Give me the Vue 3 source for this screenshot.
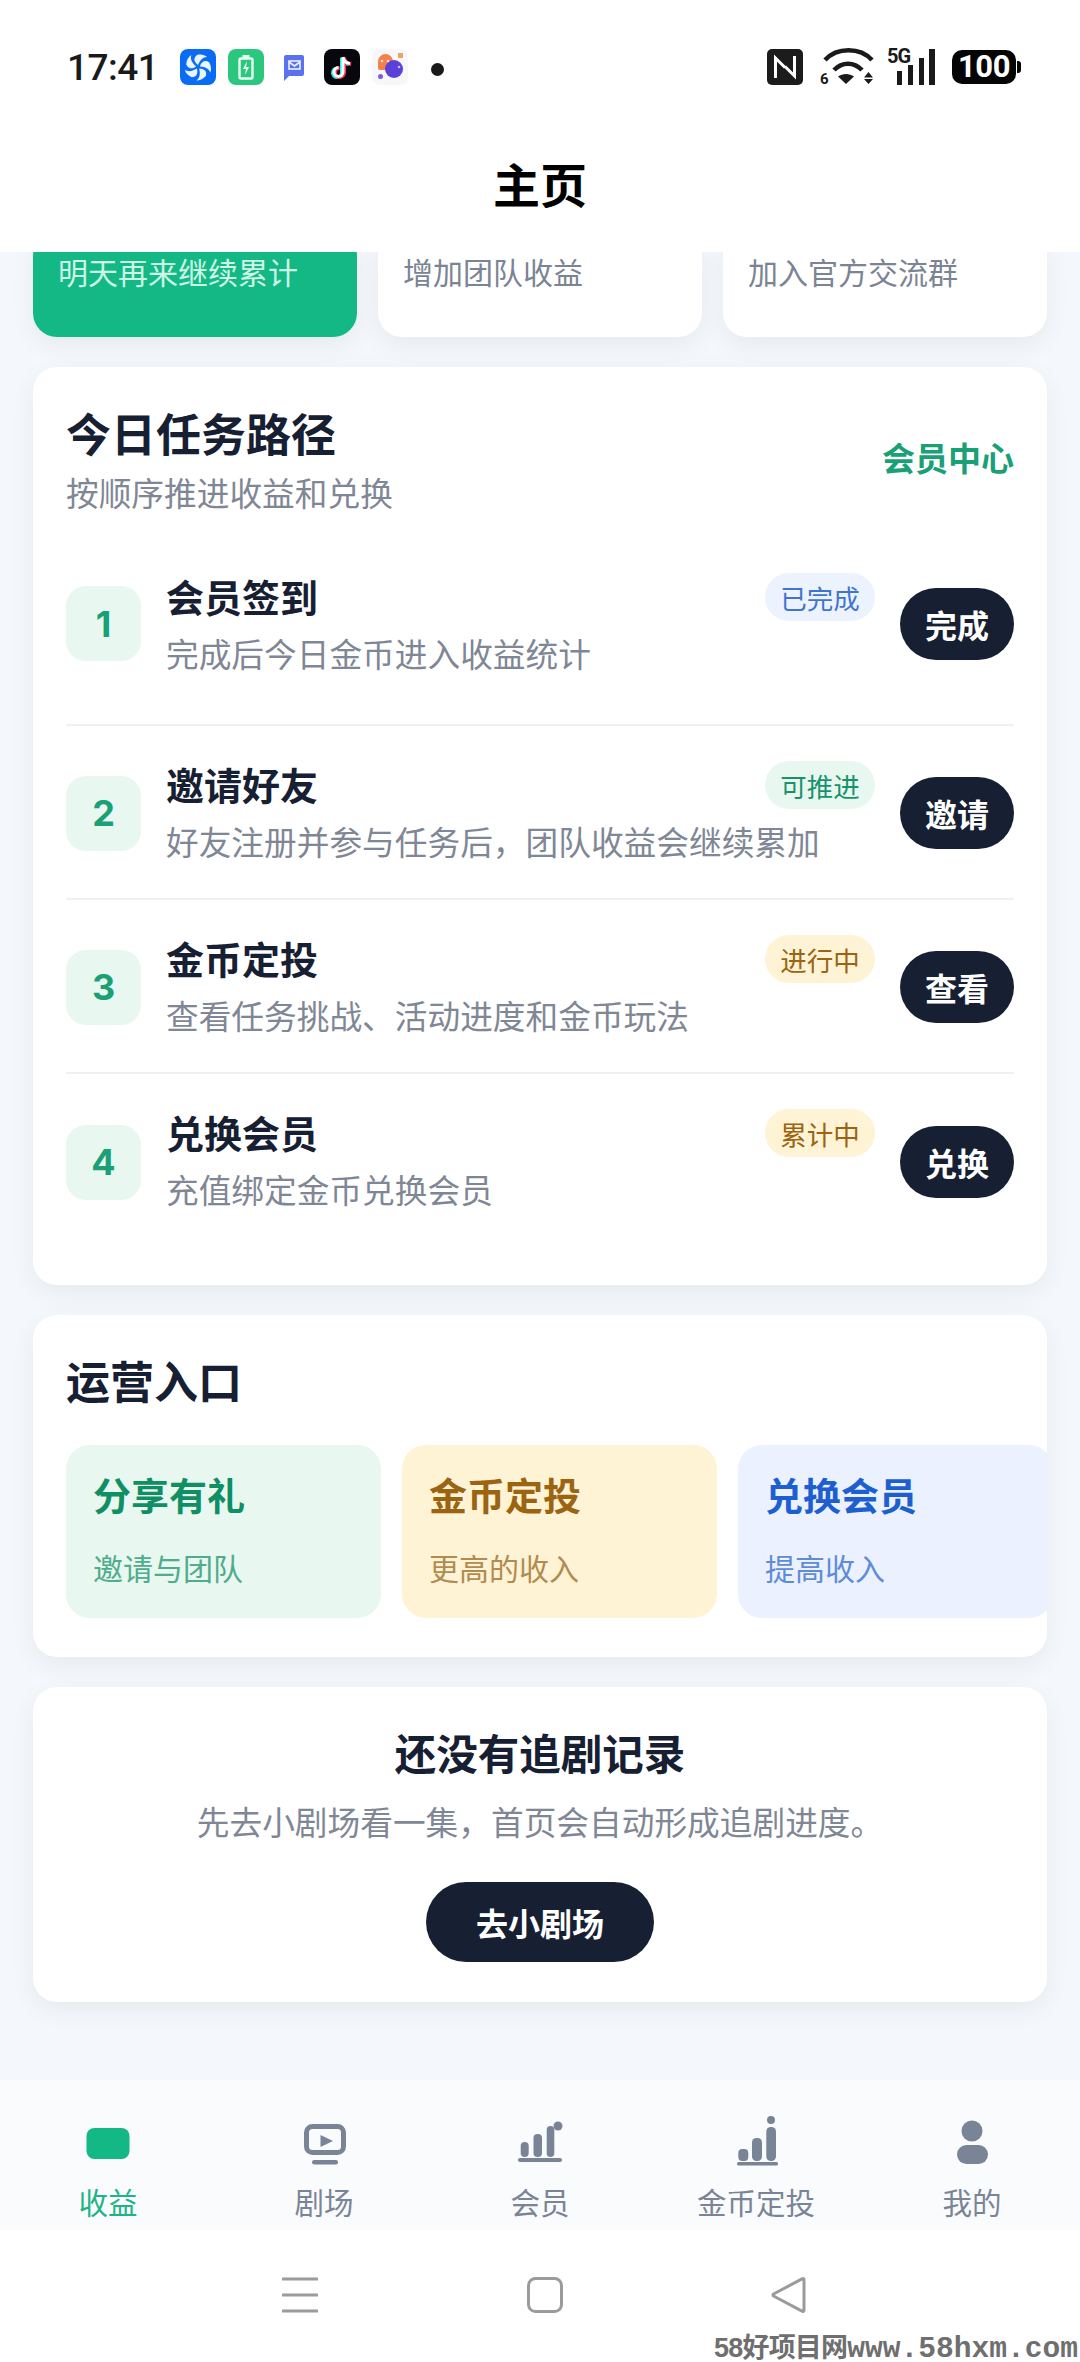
<template>
  <div class="page">
    <header class="top">
      <div class="status">
        <span class="time">17:41</span>
        <div class="notify">
          <svg width="36" height="36" viewBox="0 0 36 36">
            <rect width="36" height="36" rx="8" fill="#0a6cf5" />
            <g fill="#e9f4ff">
              <path v-for="a in [0, 72, 144, 216, 288]" :key="a" :transform="`rotate(${a} 18 18)`" d="M18 16C14 13 13 9 17 6c4-1 8 0 10 2-4 0-7 3-9 8z" />
            </g>
          </svg>
          <svg width="36" height="36" viewBox="0 0 36 36">
            <rect width="36" height="36" rx="8" fill="#2cc77f" />
            <rect x="11.500" y="9.500" width="13" height="20" rx="1.500" fill="none" stroke="#eafff3" stroke-width="2.400" />
            <rect x="14.500" y="6" width="7" height="3" fill="#eafff3" />
            <path d="M19 12l-4 8h3l-1 6 4-8h-3z" fill="#eafff3" />
          </svg>
          <svg class="mail" width="22" height="28" viewBox="0 0 22 28">
            <path d="M3 1h16a2 2 0 0 1 2 2v17a2 2 0 0 1-2 2H6l-5 5V3a2 2 0 0 1 2-2z" fill="#5b72ee" />
            <rect x="6" y="7" width="11" height="8" fill="none" stroke="#eef1ff" stroke-width="1.600" />
            <path d="M6 8l5.500 4L17 8" fill="none" stroke="#eef1ff" stroke-width="1.600" />
          </svg>
          <svg width="36" height="36" viewBox="0 0 36 36">
            <rect width="36" height="36" rx="8" fill="#07070d" />
            <path d="M19 8v15a4.500 4.500 0 1 1-4.500-4.500M19 8c.5 3.500 3 6 7 6.500" fill="none" stroke="#25f4ee" stroke-width="3.600" transform="translate(-1.200 .8)" />
            <path d="M19 8v15a4.500 4.500 0 1 1-4.500-4.500M19 8c.5 3.500 3 6 7 6.500" fill="none" stroke="#fe2c55" stroke-width="3.600" transform="translate(1.200 .6)" />
            <path d="M19 8v15a4.500 4.500 0 1 1-4.500-4.500M19 8c.5 3.500 3 6 7 6.500" fill="none" stroke="#fff" stroke-width="3" />
          </svg>
          <svg width="36" height="36" viewBox="0 0 36 36">
            <rect width="36" height="36" rx="8" fill="#f7f7fa" />
            <path d="M6 13a7.500 8 0 0 1 15 0v8H8a2 2 0 0 1-2-2z" fill="#f5804a" />
            <circle cx="22" cy="20" r="9" fill="#5a3fd8" />
            <circle cx="10" cy="12" r="1.300" fill="#ffe6d8" />
            <circle cx="16" cy="12" r="1.300" fill="#ffe6d8" />
            <circle cx="27" cy="18" r="1.300" fill="#c8bcff" />
            <circle cx="8.500" cy="27.500" r="2.500" fill="#7a5ce0" />
            <rect x="26" y="4" width="5" height="5" fill="#eda45e" />
          </svg>
          <i class="dot"></i>
        </div>
        <div class="sys">
          <svg width="36" height="36" viewBox="0 0 36 36">
            <rect width="36" height="36" rx="5" fill="#1c1c1c" />
            <path d="M8.500 29V9l9.500 9.500M27.500 7v20L18 17.500" fill="none" stroke="#fff" stroke-width="3" />
          </svg>
          <svg class="wifi" width="52" height="36" viewBox="0 0 52 36">
            <g fill="none" stroke="#1a1a1a" stroke-width="4.500">
              <path d="M5 11C17-2 40-2 52 11" />
              <path d="M14 21c8-8.500 20-8.500 28 0" />
            </g>
            <path d="M26 35l-8-7.500c4.500-3.500 11.500-3.500 16 0z" fill="#1a1a1a" />
            <text x="0" y="35" class="wifi-six">6</text>
            <path d="M48.500 23l4.500 5.500h-9zM48.500 35l4.500-5h-9z" fill="#1a1a1a" />
          </svg>
          <svg class="signal" width="48" height="36" viewBox="0 0 48 36">
            <text x="0" y="14" class="five-g">5G</text>
            <rect x="10" y="22" width="5" height="14" fill="#1a1a1a" />
            <rect x="21" y="16" width="5" height="20" fill="#1a1a1a" />
            <rect x="32" y="9" width="5" height="27" fill="#1a1a1a" />
            <rect x="42" y="0" width="6" height="36" fill="#1a1a1a" />
          </svg>
          <div class="battery"><span>100</span></div>
        </div>
      </div>
      <h1 class="page-title">主页</h1>
    </header>

    <main class="scroll">
      <div class="quick">
        <div v-for="q in quick" :key="q.text" class="quick-card" :class="{ active: q.active }">{{ q.text }}</div>
      </div>

      <section class="card tasks">
        <div class="tasks-head">
          <div>
            <h2 class="card-title">今日任务路径</h2>
            <p class="muted">按顺序推进收益和兑换</p>
          </div>
          <span class="link">会员中心</span>
        </div>
        <div v-for="(t, i) in tasks" :key="t.title" class="task" :class="{ first: i === 0 }">
          <span class="num">{{ i + 1 }}</span>
          <div class="task-main">
            <div class="task-top">
              <strong>{{ t.title }}</strong>
              <span class="chip" :class="t.tone">{{ t.state }}</span>
            </div>
            <p class="muted">{{ t.desc }}</p>
          </div>
          <button class="go">{{ t.action }}</button>
        </div>
      </section>

      <section class="card ops">
        <h2 class="card-title small">运营入口</h2>
        <div class="tiles">
          <div v-for="e in entries" :key="e.title" class="tile" :class="e.tone">
            <strong>{{ e.title }}</strong>
            <span>{{ e.sub }}</span>
          </div>
        </div>
      </section>

      <section class="card empty">
        <h3>还没有追剧记录</h3>
        <p class="muted">先去小剧场看一集，首页会自动形成追剧进度。</p>
        <button class="cta">去小剧场</button>
      </section>
    </main>

    <nav class="tabs">
      <div class="tab on">
        <svg viewBox="0 0 60 50"><rect x="8.500" y="10" width="43" height="31" rx="8" fill="#14b885" /></svg>
        <span>收益</span>
      </div>
      <div class="tab">
        <svg viewBox="0 0 60 50">
          <rect x="12.500" y="8.500" width="37" height="26" rx="6" fill="none" stroke="#7a8497" stroke-width="5" />
          <path d="M26.500 17L39 23 26.500 29z" />
          <rect x="18" y="42" width="26" height="4.500" rx="2.200" />
        </svg>
        <span>剧场</span>
      </div>
      <div class="tab">
        <svg viewBox="0 0 60 50">
          <rect x="10.700" y="24" width="8" height="15" rx="4" />
          <rect x="23.500" y="16" width="8.500" height="23" rx="4" />
          <rect x="36.700" y="8" width="7.600" height="31" rx="3.800" />
          <circle cx="48" cy="8" r="4.500" />
          <rect x="8" y="40" width="44" height="4" rx="2" />
        </svg>
        <span>会员</span>
      </div>
      <div class="tab">
        <svg viewBox="0 0 60 50">
          <rect x="12.300" y="31" width="10" height="12" rx="4" />
          <rect x="26" y="20" width="10" height="23" rx="4.500" />
          <rect x="40.300" y="9" width="9.700" height="34" rx="4.500" />
          <circle cx="45" cy="2" r="4" />
          <rect x="11" y="44" width="41" height="3.500" rx="1.500" />
        </svg>
        <span>金币定投</span>
      </div>
      <div class="tab">
        <svg viewBox="0 0 60 50">
          <circle cx="30" cy="13" r="10.500" />
          <rect x="15" y="27" width="31" height="19" rx="9.500" />
        </svg>
        <span>我的</span>
      </div>
    </nav>

    <footer class="sysnav">
      <svg width="36" height="36" viewBox="0 0 36 36">
        <path d="M0 2h36M0 18h36M0 34h36" stroke="#9b9b9b" stroke-width="3" />
      </svg>
      <svg width="36" height="36" viewBox="0 0 36 36">
        <rect x="1.500" y="1.500" width="33" height="33" rx="7" fill="none" stroke="#9b9b9b" stroke-width="3" />
      </svg>
      <svg width="36" height="36" viewBox="0 0 36 36">
        <path d="M33 2.500v31a1 1 0 0 1-1.500.8L2.500 19a1.200 1.200 0 0 1 0-2L31.500 1.700a1 1 0 0 1 1.500.8z" fill="none" stroke="#9b9b9b" stroke-width="3" stroke-linejoin="round" />
      </svg>
    </footer>
    <div class="mark"><span>58好项目网</span><b>www.58hxm.com</b></div>
  </div>
</template>

<script setup>
const quick = [
  { text: '明天再来继续累计', active: true },
  { text: '增加团队收益' },
  { text: '加入官方交流群' }
]

const tasks = [
  { title: '会员签到', desc: '完成后今日金币进入收益统计', state: '已完成', tone: 'blue', action: '完成' },
  { title: '邀请好友', desc: '好友注册并参与任务后，团队收益会继续累加', state: '可推进', tone: 'green', action: '邀请' },
  { title: '金币定投', desc: '查看任务挑战、活动进度和金币玩法', state: '进行中', tone: 'amber', action: '查看' },
  { title: '兑换会员', desc: '充值绑定金币兑换会员', state: '累计中', tone: 'amber', action: '兑换' }
]

const entries = [
  { title: '分享有礼', sub: '邀请与团队', tone: 'green' },
  { title: '金币定投', sub: '更高的收入', tone: 'amber' },
  { title: '兑换会员', sub: '提高收入', tone: 'blue' }
]
</script>

<style>
body { margin: 0; background: #f4f7fb; }
</style>

<style scoped>
* { box-sizing: border-box; }
.page { position: relative; width: 1080px; height: 2362px; display: flex; flex-direction: column; overflow: hidden; background: #f4f7fb; color: #172033; font-family: Inter, "Noto Sans CJK SC", sans-serif; }
h1, h2, h3, p { margin: 0; }

.top { height: 252px; flex: none; background: #fff; position: relative; z-index: 2; }
.status { display: flex; align-items: center; height: 36px; padding: 0 59px 0 67px; position: relative; top: 49px; }
.time { width: 113px; font-family: Roboto, sans-serif; font-size: 37px; font-weight: 500; color: #1a1a1a; letter-spacing: -0.5px; }
.notify { display: flex; align-items: center; gap: 12px; }
.mail { margin: 2px 7px 0 7px; }
.dot { width: 13px; height: 13px; margin: 4px 0 0 11px; border-radius: 50%; background: #1a1a1a; }
.sys { margin-left: auto; display: flex; align-items: center; gap: 17px; }
.wifi, .signal { overflow: visible; }
.wifi { margin-right: -2px; }
.wifi-six { font: 700 15px Roboto, sans-serif; fill: #1a1a1a; }
.five-g { font: 700 20px Roboto, sans-serif; letter-spacing: -1px; fill: #1a1a1a; }
.battery { position: relative; width: 64px; height: 34px; border-radius: 10px; background: #050505; display: flex; align-items: center; justify-content: center; margin-right: 5px; }
.battery::after { content: ""; position: absolute; right: -5px; top: 11px; width: 4px; height: 12px; border-radius: 0 3px 3px 0; background: #050505; }
.battery span { color: #fff; font: 700 31px/34px Roboto, sans-serif; letter-spacing: -0.5px; }
.page-title { position: absolute; left: 0; right: 0; top: 156px; text-align: center; font-size: 47px; line-height: 60px; font-weight: 700; color: #000; }

.scroll { flex: 1; min-height: 0; overflow: hidden; padding: 0 33px; display: flex; flex-direction: column; gap: 30px; }
.quick { flex: none; display: flex; gap: 21px; margin-top: -20px; }
.quick-card { flex: 1; padding: 19px 0 42px 25px; border-radius: 24px; background: #fff; color: #7b8494; font-size: 30px; line-height: 44px; box-shadow: 0 8px 26px rgba(23, 32, 51, 0.06); }
.quick-card.active { background: #14b885; color: #cdf5e6; }

.card { flex: none; background: #fff; border-radius: 24px; box-shadow: 0 8px 26px rgba(23, 32, 51, 0.06); overflow: hidden; }
.card-title { font-size: 45px; line-height: 56px; font-weight: 700; }
.card-title.small { font-size: 44px; }
.muted { color: #7f8796; font-size: 32.700px; line-height: 46px; white-space: nowrap; }

.tasks { padding: 41px 33px 33px; height: 918px; }
.tasks-head { display: flex; align-items: center; justify-content: space-between; margin-bottom: 21px; }
.tasks-head .muted { margin-top: 7px; }
.link { margin-bottom: 12px; font-size: 33px; font-weight: 700; color: #1aa077; }

.task { display: flex; align-items: center; height: 174px; padding: 35px 0 33px; border-bottom: 2px solid #eef1f4; }
.task.first { height: 188px; padding-bottom: 50px; }
.task:last-child { border-bottom: 0; }
.num { flex: none; width: 75px; height: 75px; margin-right: 25px; border-radius: 20px; background: #e9f7f1; color: #1aa077; font-size: 36px; font-weight: 700; display: flex; align-items: center; justify-content: center; }
.task-main { flex: 1; min-width: 0; height: 104px; align-self: flex-start; }
.task-top { display: flex; align-items: center; justify-content: space-between; height: 48px; margin-bottom: 11px; }
.task-top strong { margin-bottom: 4px; font-size: 38px; font-weight: 700; }
.chip { width: 110px; height: 48px; border-radius: 24px; font-size: 26.500px; display: flex; align-items: center; justify-content: center; }
.chip.blue { background: #edf3fe; color: #3f74d2; }
.chip.green { background: #e9f7f1; color: #17936c; }
.chip.amber { background: #fff3d6; color: #9a6410; }
.go { flex: none; width: 114px; height: 72px; margin-left: 25px; border: 0; border-radius: 36px; background: #172033; color: #fff; font: 700 32px Inter, "Noto Sans CJK SC", sans-serif; padding: 0; }

.ops { padding: 40px 0 39px 33px; }
.tiles { display: flex; gap: 21px; margin-top: 34px; }
.tile { flex: none; width: 315px; height: 173px; padding: 26px 0 0 27px; border-radius: 24px; display: flex; flex-direction: column; }
.tile strong { font-size: 38px; line-height: 50px; font-weight: 700; }
.tile span { margin-top: 26px; font-size: 30px; line-height: 44px; }
.tile.green { background: #e9f7f1; color: #0f8f63; }
.tile.green span { color: #4fac8c; }
.tile.amber { background: #fff3d6; color: #9a6410; }
.tile.amber span { color: #b08c50; }
.tile.blue { background: #ebf1fe; color: #1d5fd0; }
.tile.blue span { color: #5e8cd8; }

.empty { padding: 40px 33px; text-align: center; }
.empty h3 { font-size: 41.500px; line-height: 56px; font-weight: 700; }
.empty .muted { margin-top: 17px; }
.cta { display: block; width: 228px; height: 80px; margin: 36px auto 0; border: 0; border-radius: 40px; background: #172033; color: #fff; font: 700 32px Inter, "Noto Sans CJK SC", sans-serif; }

.tabs { flex: none; height: 150px; padding-top: 38px; display: flex; background: #f9fbfd; }
.tab { flex: 1; display: flex; flex-direction: column; align-items: center; color: #7a8497; font-size: 29.500px; line-height: 36px; }
.tab svg { width: 60px; height: 50px; margin-bottom: 17px; overflow: visible; fill: #7a8497; }
.tab.on { color: #1fb488; }

.sysnav { flex: none; height: 132px; background: #fff; position: relative; padding: 47px 273px 0 282px; display: flex; justify-content: space-between; align-items: flex-start; }
.mark { position: absolute; left: 714px; bottom: 0; display: flex; align-items: baseline; color: #6f6f6f; white-space: nowrap; line-height: 26px; }
.mark span { font: 700 27px/26px "Liberation Sans", "Noto Sans CJK SC", sans-serif; letter-spacing: -0.8px; }
.mark b { font: 700 29.600px/26px "Liberation Mono", monospace; }
</style>
